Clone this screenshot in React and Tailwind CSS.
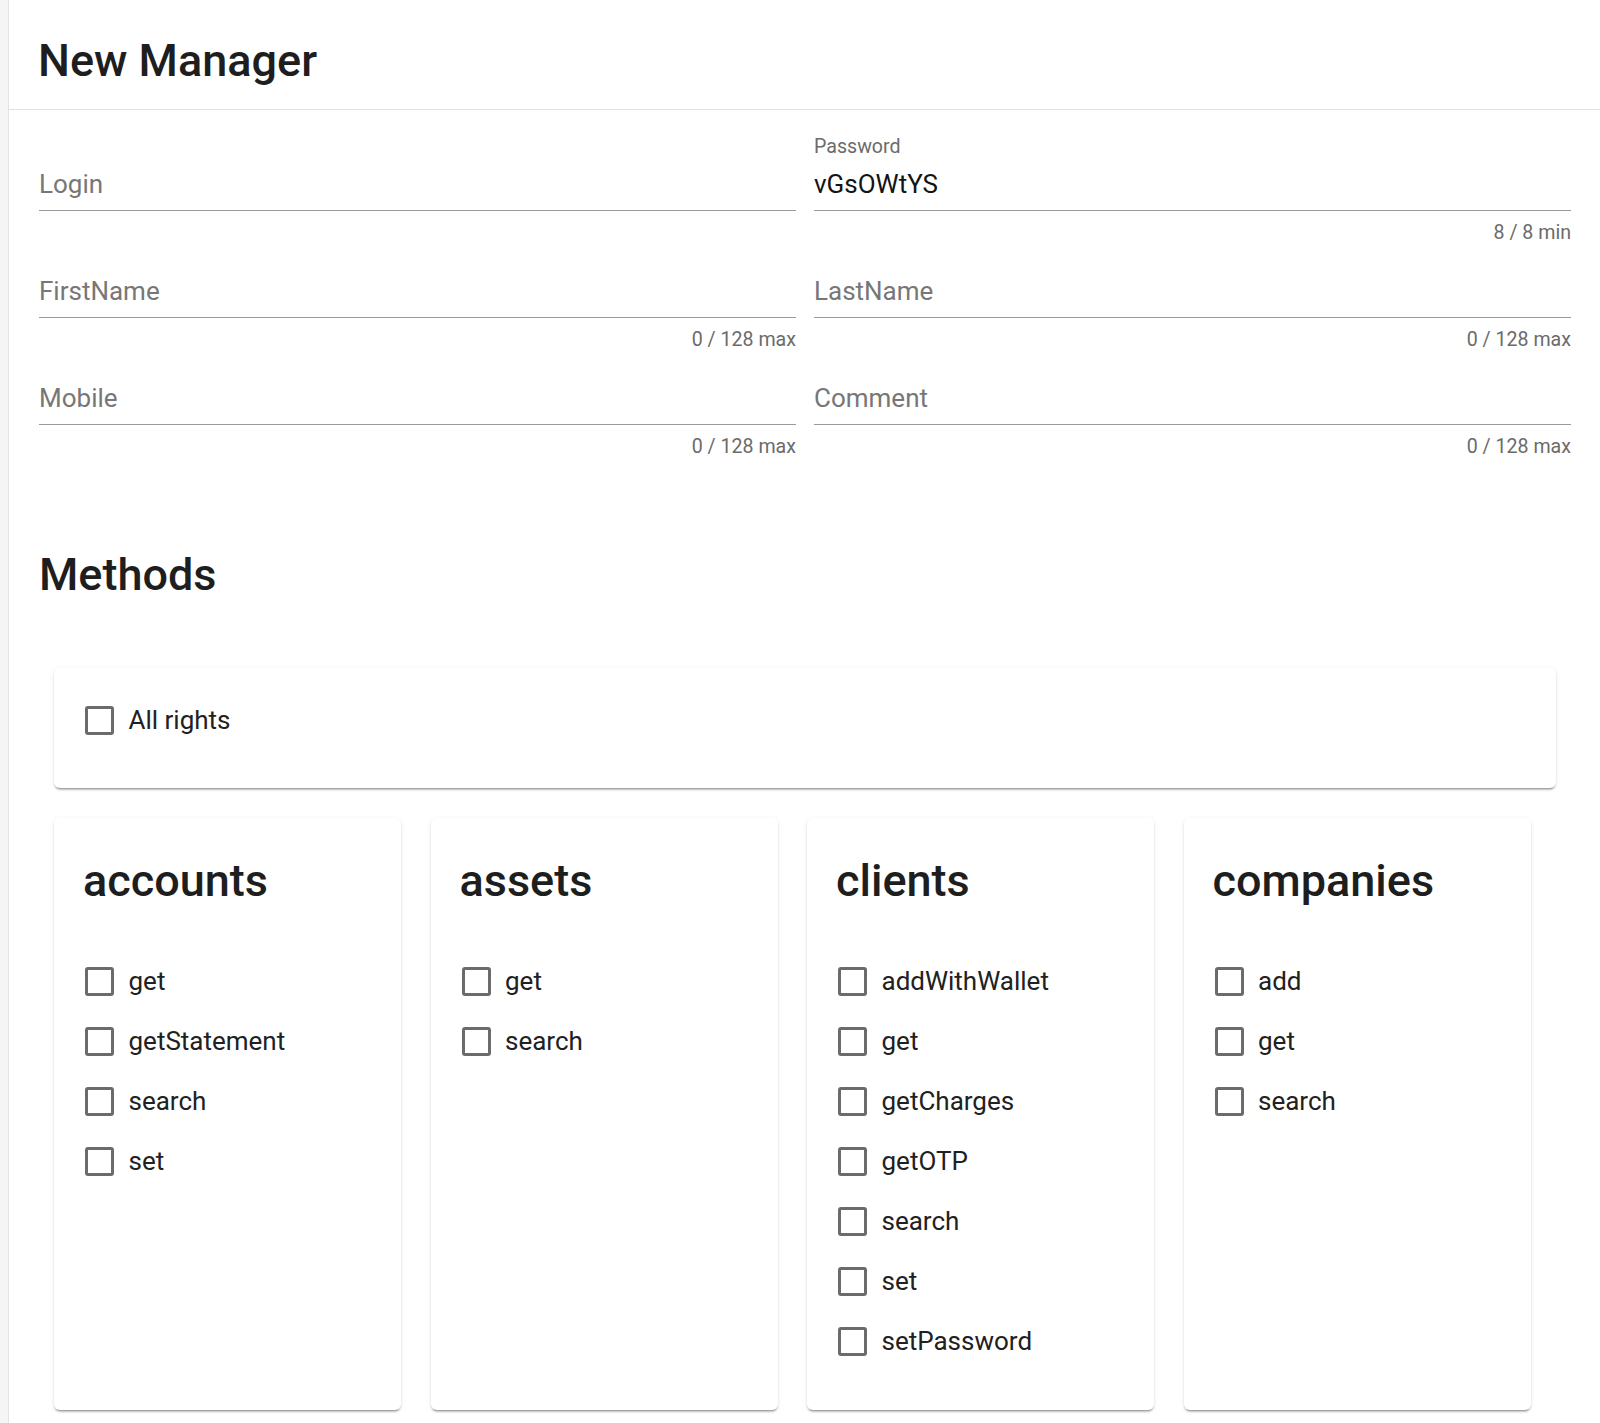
import React from "react";

function Box() {
  return (
    <span className="inline-block w-[29px] h-[29px] shrink-0 rounded-[3px] border-[3px] border-[#6b6b6b] bg-white" />
  );
}

function Check({ label }) {
  return (
    <div className="flex items-center h-[60px]">
      <Box />
      <span className="ml-[14.5px] text-[26px] leading-[30px] text-[#212121]">{label}</span>
    </div>
  );
}

function Field({ label, value, floating, counter }) {
  return (
    <div className="flex flex-col">
      <div className="h-[22px] text-[19.6px] leading-[22px] text-[#6b6b6b]">{floating ? label : ""}</div>
      <div className="h-[52px] flex items-center text-[26px] leading-[30px]">
        {value ? (
          <span className="text-[#141414]">{value}</span>
        ) : (
          <span className="text-[#777777]">{label}</span>
        )}
      </div>
      <div className="h-px bg-[#9a9a9a]" />
      <div className="h-[32px] pt-[10px] text-right text-[19.6px] leading-[24px] text-[#6b6b6b]">
        {counter}
      </div>
    </div>
  );
}

const groups = [
  { name: "accounts", items: ["get", "getStatement", "search", "set"] },
  { name: "assets", items: ["get", "search"] },
  { name: "clients", items: ["addWithWallet", "get", "getCharges", "getOTP", "search", "set", "setPassword"] },
  { name: "companies", items: ["add", "get", "search"] },
];

const cardShadow =
  "shadow-[0_3px_2px_-2px_rgba(0,0,0,0.32),0_2px_2px_0_rgba(0,0,0,0.12),0_1px_5px_0_rgba(0,0,0,0.08)]";

export default function App() {
  return (
    <div
      className="flex w-[1600px] min-h-[1423px] bg-white"
      style={{ fontFamily: "Roboto, 'Noto Sans', sans-serif" }}
    >
      <div className="w-[8px] shrink-0 bg-[#f5f5f5]" />
      <main className="flex-1 border-l border-[#e3e3e3] bg-white">
        <header className="border-b border-[#e0e0e0] pl-[29px] pt-[37px] pb-[24px]">
          <h1 className="text-[45px] leading-[48px] font-medium text-[#1e1e1e]">New Manager</h1>
        </header>
        <div className="pl-[30px] pr-[29px] pt-[26px]">
          <div className="grid grid-cols-2 gap-x-[18px]">
            <Field label="Login" />
            <Field label="Password" value="vGsOWtYS" floating counter="8 / 8 min" />
            <Field label="FirstName" counter="0 / 128 max" />
            <Field label="LastName" counter="0 / 128 max" />
            <Field label="Mobile" counter="0 / 128 max" />
            <Field label="Comment" counter="0 / 128 max" />
          </div>
          <h2 className="mt-[91px] text-[45px] leading-[54px] font-medium text-[#1e1e1e]">Methods</h2>
          <div className="px-[15px] mt-[66px] pb-[13px]">
            <div className={`bg-white rounded-[6px] h-[120px] pl-[31px] pt-[32px] ${cardShadow}`}>
              <div className="flex items-center h-[40px]">
                <Box />
                <span className="ml-[14.5px] text-[26px] leading-[30px] text-[#212121]">All rights</span>
              </div>
            </div>
            <div className="flex gap-[29.5px] mt-[30px]">
              {groups.map((g) => (
                <div
                  key={g.name}
                  className={`w-[347px] h-[592px] bg-white rounded-[6px] pl-[31px] pt-[36px] ${cardShadow}`}
                >
                  <h3 className="-ml-[2px] text-[45px] leading-[54px] font-medium text-[#1e1e1e]">{g.name}</h3>
                  <div className="mt-[43px]">
                    {g.items.map((it) => (
                      <Check key={it} label={it} />
                    ))}
                  </div>
                </div>
              ))}
            </div>
          </div>
        </div>
      </main>
    </div>
  );
}
